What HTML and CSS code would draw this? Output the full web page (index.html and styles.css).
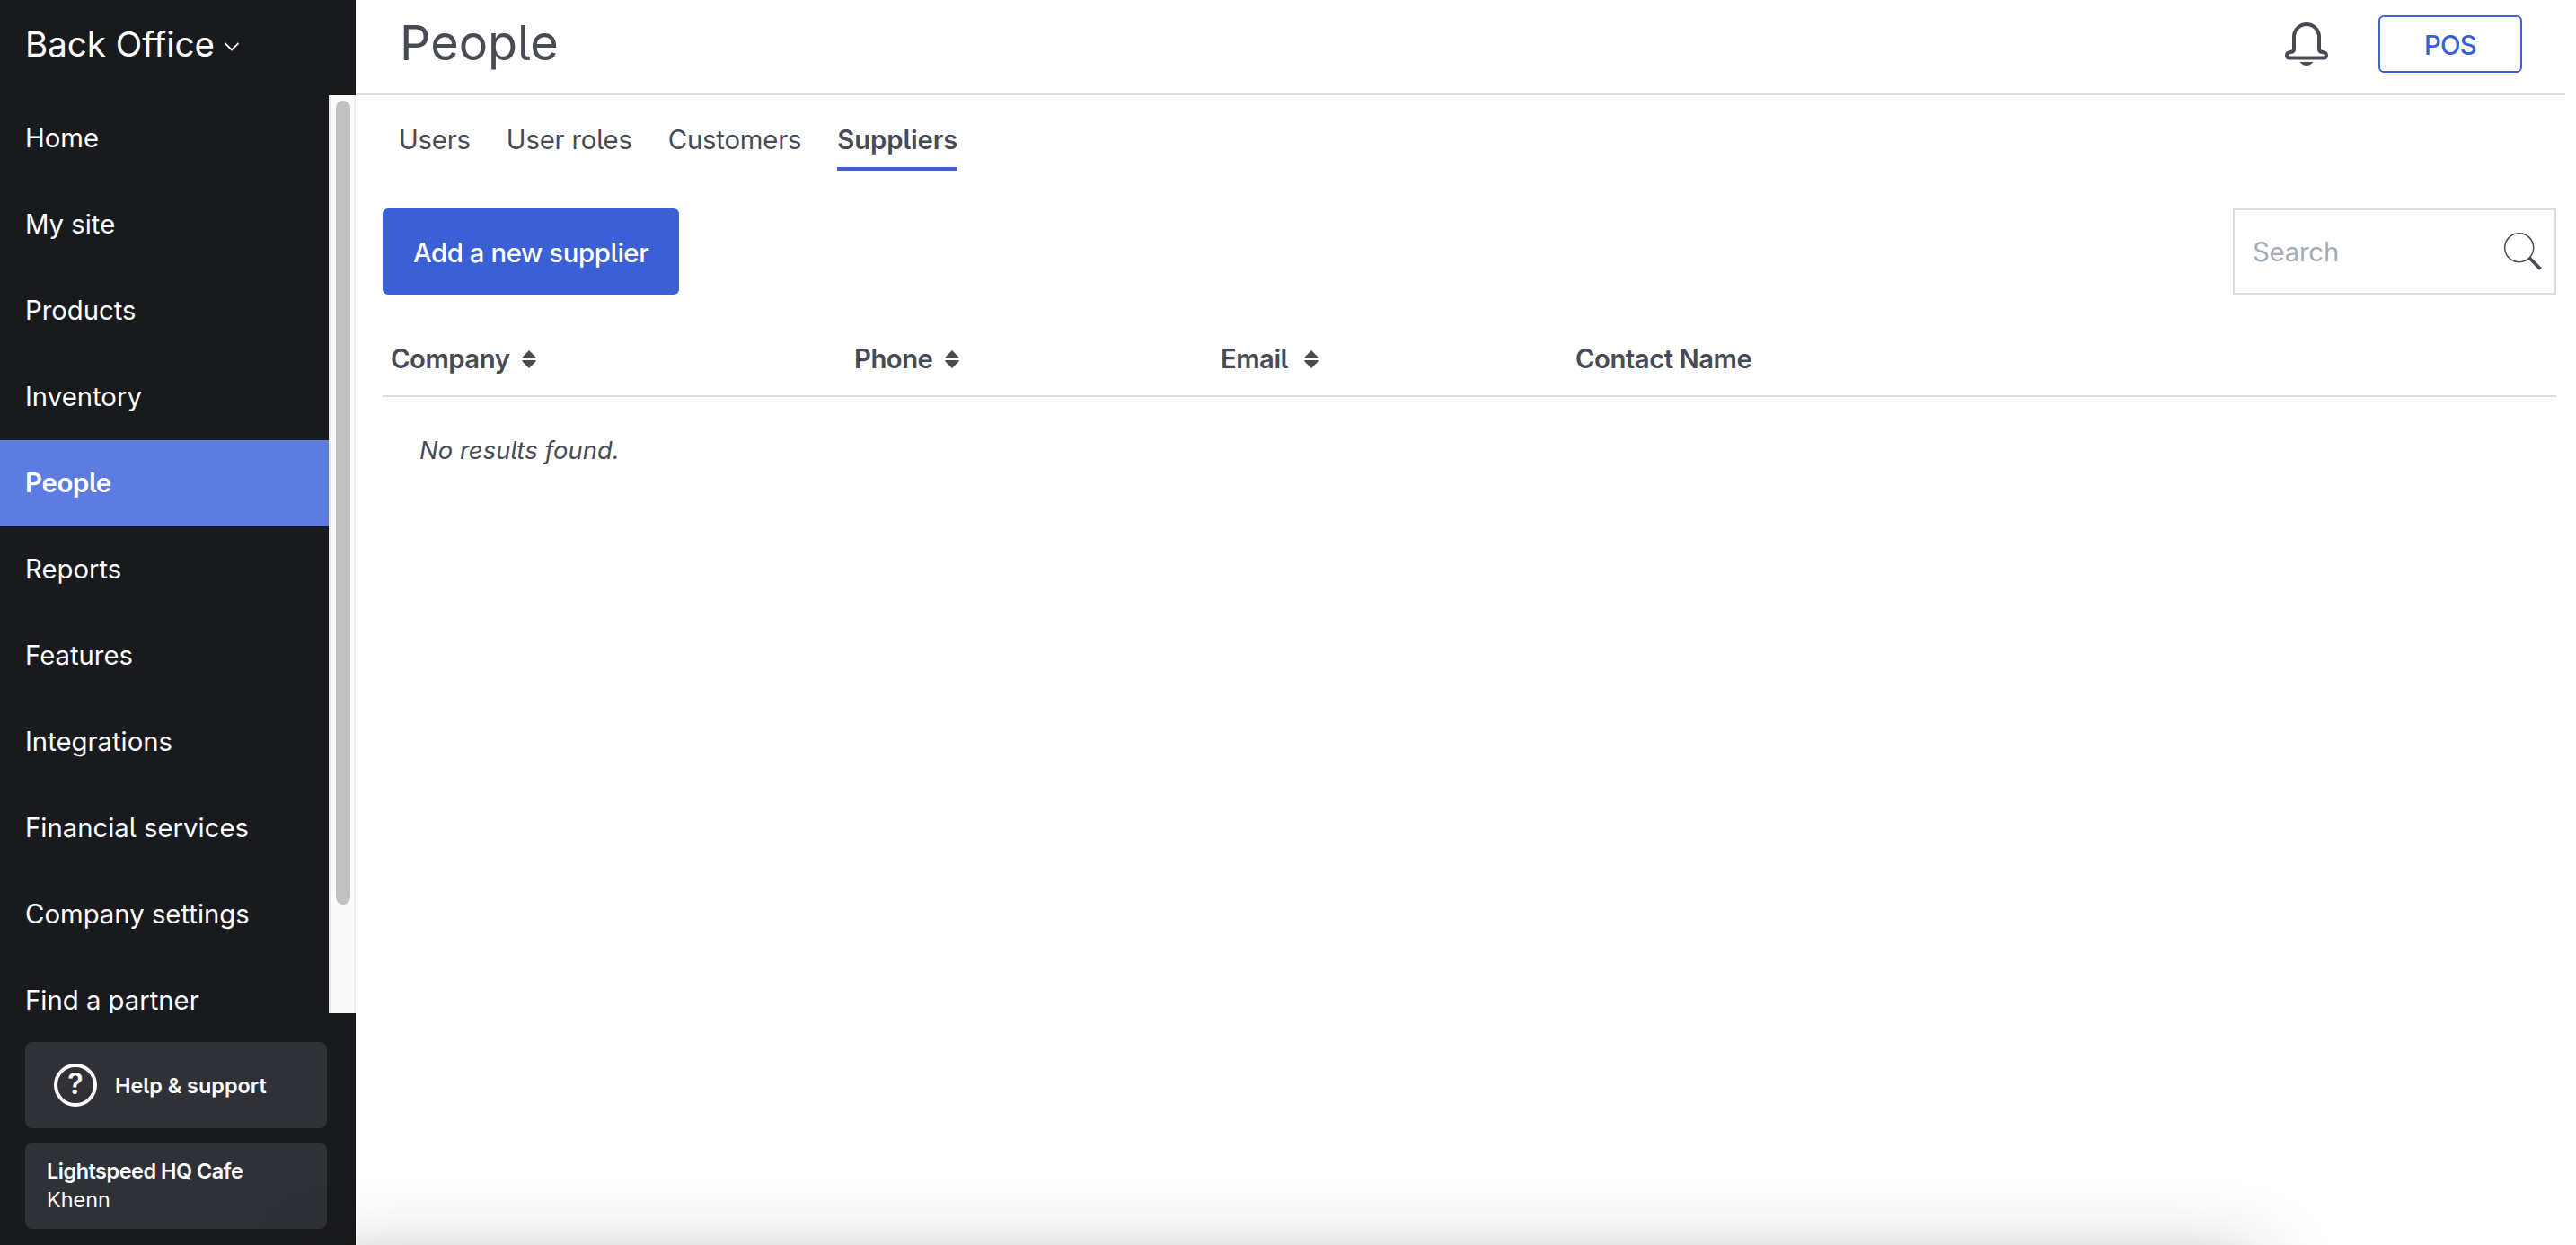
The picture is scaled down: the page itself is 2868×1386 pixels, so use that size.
FILE: index.html
```html
<!DOCTYPE html>
<html lang="en">
<head>
    <meta charset="UTF-8">
    <meta name="viewport" content="width=device-width, initial-scale=1.0">
    <title>Back Office - Suppliers</title>
    <link rel="stylesheet" href="styles.css">
</head>
<body>
    <div class="app">
        <aside class="sidebar">
            <div class="brand">
                <span>Back Office</span>
                <svg class="chevron" viewBox="0 0 18 12" width="18" height="12">
                    <path d="M1.5 2 L9 9.5 L16.5 2" fill="none" stroke="#fff" stroke-width="1.8"/>
                </svg>
            </div>

            <div class="nav-wrap">
                <nav class="nav">
                    <a href="#">Home</a>
                    <a href="#">My site</a>
                    <a href="#">Products</a>
                    <a href="#">Inventory</a>
                    <a href="#" class="active">People</a>
                    <a href="#">Reports</a>
                    <a href="#">Features</a>
                    <a href="#">Integrations</a>
                    <a href="#">Financial services</a>
                    <a href="#">Company settings</a>
                    <a href="#">Find a partner</a>
                </nav>
                <div class="scrollbar">
                    <div class="thumb"></div>
                </div>
            </div>

            <div class="sidebar-footer">
                <a href="#" class="card help">
                    <span class="help-icon">?</span>
                    <strong>Help &amp; support</strong>
                </a>
                <a href="#" class="card account">
                    <strong>Lightspeed HQ Cafe</strong>
                    <span>Khenn</span>
                </a>
            </div>
        </aside>

        <main class="main">
            <header class="header">
                <h1>People</h1>
                <div class="header-actions">
                    <svg class="bell" viewBox="0 0 48 48" width="48" height="48">
                        <path d="M10 16 A14 14 0 0 1 38 16 V29 Q38 33 42 33 Q46 33.5 46 36.7 Q46 39.5 43 39.5 H5 Q2 39.5 2 36.7 Q2 33.5 6 33 Q10 33 10 29 Z" fill="none" stroke="#484b54" stroke-width="4"/>
                        <path d="M16.5 44 H31.5 Q28 48 24 48 Q20 48 16.5 44 Z" fill="#484b54"/>
                    </svg>
                    <a href="#" class="pos-btn">POS</a>
                </div>
            </header>

            <nav class="tabs">
                <a href="#">Users</a>
                <a href="#">User roles</a>
                <a href="#">Customers</a>
                <a href="#" class="active">Suppliers</a>
            </nav>

            <section class="content">
                <div class="toolbar">
                    <button class="add-btn">Add a new supplier</button>
                    <div class="search">
                        <input type="text" placeholder="Search">
                        <svg viewBox="0 0 44 44" width="44" height="44">
                            <circle cx="17.7" cy="17.7" r="16" fill="none" stroke="#484b54" stroke-width="1.5"/>
                            <path d="M29 29 L41.5 41.5" stroke="#484b54" stroke-width="3.8"/>
                        </svg>
                    </div>
                </div>

                <table class="suppliers">
                    <thead>
                        <tr>
                            <th class="col-company">Company
                                <svg class="sort" viewBox="0 0 16 20" width="16" height="20"><path d="M8 0 L15.5 7.5 V9 H0.5 V7.5 Z M8 20 L15.5 12.5 V11 H0.5 V12.5 Z" fill="#484b54"/></svg>
                            </th>
                            <th class="col-phone">Phone
                                <svg class="sort" viewBox="0 0 16 20" width="16" height="20"><path d="M8 0 L15.5 7.5 V9 H0.5 V7.5 Z M8 20 L15.5 12.5 V11 H0.5 V12.5 Z" fill="#484b54"/></svg>
                            </th>
                            <th class="col-email">Email
                                <svg class="sort" viewBox="0 0 16 20" width="16" height="20"><path d="M8 0 L15.5 7.5 V9 H0.5 V7.5 Z M8 20 L15.5 12.5 V11 H0.5 V12.5 Z" fill="#484b54"/></svg>
                            </th>
                            <th>Contact Name</th>
                        </tr>
                    </thead>
                    <tbody>
                        <tr>
                            <td colspan="4" class="empty">No results found.</td>
                        </tr>
                    </tbody>
                </table>
            </section>
        </main>
    </div>
    <div class="bottom-shadow"></div>
</body>
</html>
```
FILE: styles.css
```css
* {
    box-sizing: border-box;
}
body {
    margin: 0;
    font-family: Inter, "Liberation Sans", sans-serif;
    font-feature-settings: "cv05";
    font-size: 29.3px;
    color: #484b54;
    background: #fff;
    overflow: hidden;
}
a {
    color: inherit;
    text-decoration: none;
}
.app {
    display: flex;
    height: 100vh;
}

/* Sidebar */
.sidebar {
    width: 396px;
    flex-shrink: 0;
    display: flex;
    flex-direction: column;
    background: #191a1d;
    color: #fff;
}
.brand {
    height: 106px;
    flex-shrink: 0;
    display: flex;
    align-items: center;
    gap: 10px;
    padding: 0 0 8px 28px;
    font-size: 38.5px;
}
.chevron {
    margin-top: 5px;
}
.nav-wrap {
    display: flex;
    height: 1022px;
    flex-shrink: 0;
    overflow: hidden;
}
.nav {
    flex: 1;
}
.nav a {
    display: block;
    height: 96px;
    line-height: 96px;
    padding-left: 28px;
}
.nav a.active {
    background: #5c7ce2;
    font-weight: 600;
    letter-spacing: -0.3px;
}
.scrollbar {
    width: 30px;
    padding: 6px 4px 0 6px;
    background: #fafafa;
    border-left: 2px solid #e8e8e8;
    border-right: 2px solid #ededed;
}
.thumb {
    width: 16px;
    height: 895px;
    border-radius: 8px;
    background: #c1c1c1;
}
.sidebar-footer {
    display: flex;
    flex-direction: column;
    gap: 16px;
    padding: 32px 32px 0 28px;
    font-size: 23.4px;
}
.sidebar-footer strong {
    font-weight: 600;
}
.card {
    height: 96px;
    border-radius: 8px;
    background: #303136;
}
.help {
    display: flex;
    align-items: center;
    gap: 20px;
    padding-left: 32px;
}
.help-icon {
    width: 48px;
    height: 48px;
    border: 4px solid #fff;
    border-radius: 50%;
    font-size: 32px;
    font-weight: 600;
    line-height: 38px;
    text-align: center;
}
.account {
    display: flex;
    flex-direction: column;
    padding: 16px 24px;
    line-height: 32px;
}
.account strong {
    letter-spacing: -0.45px;
}

/* Main */
.main {
    flex: 1;
}
.header {
    display: flex;
    justify-content: space-between;
    height: 106px;
    margin-right: 12px;
    padding: 0 48px 0 49px;
    border-bottom: 2px solid #d8dbdf;
}
.header h1 {
    margin: 0;
    font-size: 54px;
    font-weight: 400;
    line-height: 95px;
}
.header-actions {
    display: flex;
    align-items: flex-start;
    gap: 56px;
    padding-top: 17px;
}
.bell {
    margin-top: 8px;
}
.pos-btn {
    width: 160px;
    height: 64px;
    border: 2px solid #3b5fd5;
    border-radius: 6px;
    color: #3b5fd5;
    font-weight: 500;
    letter-spacing: -0.8px;
    line-height: 63px;
    text-align: center;
}
.tabs {
    display: flex;
    gap: 40px;
    padding: 28px 0 0 48px;
    letter-spacing: -0.2px;
}
.tabs a {
    height: 56px;
    line-height: 44px;
}
.tabs .active {
    border-bottom: 4px solid #3b5fd5;
    font-weight: 600;
    letter-spacing: -0.1px;
}
.content {
    padding: 42px 22px 0 30px;
}
.toolbar {
    display: flex;
    justify-content: space-between;
}
.add-btn {
    width: 330px;
    height: 96px;
    padding: 3px 0 0;
    border: none;
    border-radius: 6px;
    background: #3b5fd5;
    color: #fff;
    font: inherit;
    font-weight: 500;
    font-feature-settings: inherit;
    letter-spacing: -0.4px;
}
.search {
    display: flex;
    align-items: center;
    width: 360px;
    height: 96px;
    padding: 0 13px 0 20px;
    border: 2px solid #d8dbdf;
}
.search input {
    flex: 1;
    min-width: 0;
    padding: 0;
    border: none;
    outline: none;
    font: inherit;
    letter-spacing: -0.2px;
    color: inherit;
}
.search input::placeholder {
    color: #a5abb4;
}

/* Suppliers table */
.suppliers {
    width: 100%;
    margin-top: 30px;
    border-collapse: separate;
    border-spacing: 0;
    table-layout: fixed;
}
.suppliers th {
    height: 84px;
    padding: 0 8px 0 9px;
    border-bottom: 2px solid #d8dbdf;
    font-weight: 600;
    letter-spacing: -0.5px;
    text-align: left;
}
.col-company {
    width: 516px;
}
.col-phone {
    width: 408px;
}
.col-email {
    width: 395px;
}
.sort {
    margin-left: 7px;
}
.col-email .sort {
    margin-left: 11px;
}
.suppliers .empty {
    height: 118px;
    padding: 0 41px;
    font-size: 27.3px;
    font-style: italic;
    letter-spacing: 0.1px;
}

/* soft shadow along the bottom edge of the window */
.bottom-shadow {
    position: fixed;
    top: 1400px;
    left: 350px;
    width: 2165px;
    height: 200px;
    box-shadow: 0 0 84px rgba(0, 0, 0, 0.25);
}
```
